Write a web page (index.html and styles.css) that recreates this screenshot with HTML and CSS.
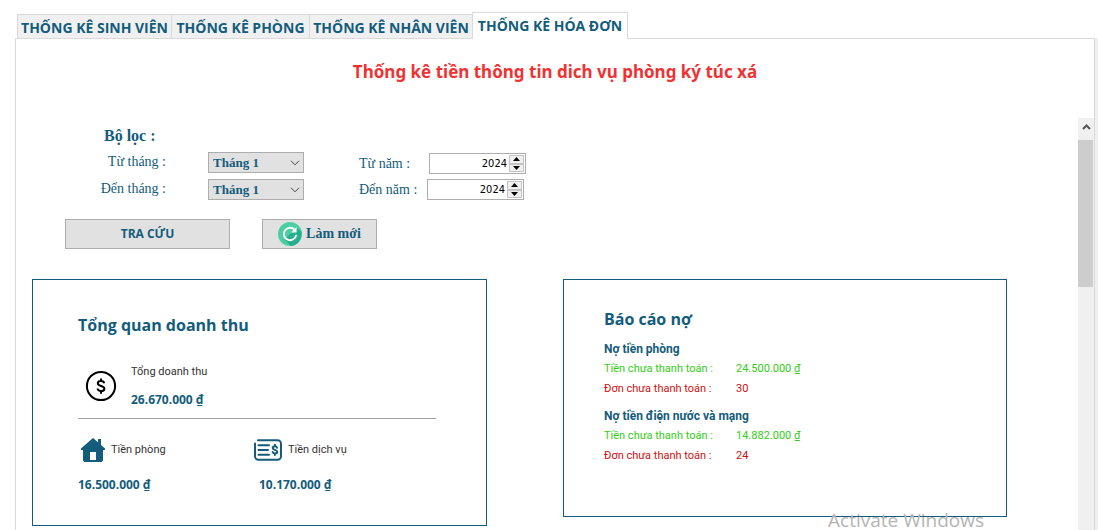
FILE: index.html
```html
<!DOCTYPE html>
<html lang="vi">
<head>
<meta charset="utf-8">
<meta name="viewport" content="width=device-width, initial-scale=1">
<title>Thống kê hóa đơn</title>
<link rel="stylesheet" href="styles.css">
</head>
<body>
<div class="window">
  <div class="tabs" role="tablist">
    <button class="tab tab-students" role="tab" type="button">THỐNG KÊ SINH VIÊN</button>
    <button class="tab tab-rooms" role="tab" type="button">THỐNG KÊ PHÒNG</button>
    <button class="tab tab-staff" role="tab" type="button">THỐNG KÊ NHÂN VIÊN</button>
    <button class="tab tab-invoices active" role="tab" type="button" aria-selected="true">THỐNG KÊ HÓA ĐƠN</button>
  </div>
  <main class="panel">
    <h1 class="title">Thống kê tiền thông tin dich vụ phòng ký túc xá</h1>
    <div class="view">
      <div class="content">
        <form class="filters">
          <h2 class="filters-title">Bộ lọc :</h2>
          <div class="filters-body">
            <div class="months">
              <label for="from-month">Từ tháng :</label>
              <span class="select"><select id="from-month"><option>Tháng 1</option></select><svg viewBox="0 0 10 6"><path d="M1 .8 5 4.8 9 .8"/></svg></span>
              <label for="to-month">Đến tháng :</label>
              <span class="select"><select id="to-month"><option>Tháng 1</option></select><svg viewBox="0 0 10 6"><path d="M1 .8 5 4.8 9 .8"/></svg></span>
            </div>
            <div class="years">
              <div class="year">
                <label for="from-year">Từ năm :</label>
                <span class="spinner"><input id="from-year" type="text" inputmode="numeric" value="2024"><span class="steps"><button type="button" aria-label="Tăng"><svg viewBox="0 0 7 4"><path d="M0 4 3.500 0 7 4z"/></svg></button><button type="button" aria-label="Giảm"><svg viewBox="0 0 7 4"><path d="M0 0h7L3.500 4z"/></svg></button></span></span>
              </div>
              <div class="year">
                <label for="to-year">Đến năm :</label>
                <span class="spinner"><input id="to-year" type="text" inputmode="numeric" value="2024"><span class="steps"><button type="button" aria-label="Tăng"><svg viewBox="0 0 7 4"><path d="M0 4 3.500 0 7 4z"/></svg></button><button type="button" aria-label="Giảm"><svg viewBox="0 0 7 4"><path d="M0 0h7L3.500 4z"/></svg></button></span></span>
              </div>
            </div>
          </div>
          <div class="actions">
            <button class="btn btn-search" type="button">TRA CỨU</button>
            <button class="btn btn-refresh" type="button">
              <svg class="refresh-icon" viewBox="0 0 24 24"><circle cx="12" cy="12" r="12" fill="#4bcfa2"/><path d="M18.600 5.500 23.300 9.800A12 12 0 0 1 12.800 24L6.500 17.600z" fill="#27ae8f"/><path d="M16.300 7.500A6.200 6.200 0 1 0 18.200 12.800" fill="none" stroke="#fff" stroke-width="1.900"/><path d="M18.600 5v5.400h-5.400z" fill="#fff"/></svg>
              Làm mới
            </button>
          </div>
        </form>
        <div class="cards">
          <section class="card revenue">
            <h2 class="card-title">Tổng quan doanh thu</h2>
            <div class="total">
              <svg class="coin" viewBox="0 0 32 32"><circle cx="16" cy="16" r="14.100" fill="none" stroke="#000" stroke-width="2"/><path d="M19.200 13.200c-.3-1.600-1.500-2.300-3.200-2.300-1.900 0-3.200.9-3.200 2.400 0 3.600 6.600 1.800 6.600 5.400 0 1.500-1.400 2.400-3.400 2.400-1.900 0-3.200-.9-3.400-2.600M16 8.500v2.400M16 21.100v2.600" fill="none" stroke="#000" stroke-width="2"/></svg>
              <div class="total-text">
                <span class="caption">Tổng doanh thu</span>
                <strong class="amount">26.670.000 ₫</strong>
              </div>
            </div>
            <div class="split">
              <div class="part room">
                <div class="part-head">
                  <svg class="house" viewBox="0 0 24 24"><path d="M12 0 0 10.500V12h2v10.500L3.500 24h17l1.500-1.500V12h2v-1.500l-4-3.600V1h-3v3.300z" fill="#135c7c"/><path d="M9 14h6v8H9z" fill="#fff"/></svg>
                  <span class="caption">Tiền phòng</span>
                </div>
                <strong class="amount">16.500.000 ₫</strong>
              </div>
              <div class="part service">
                <div class="part-head">
                  <svg class="bill" viewBox="0 0 28 22"><g fill="none" stroke="#135c7c" stroke-width="2" stroke-linecap="round"><path d="M4 1.200h19.500a3.500 3.500 0 0 1 3.500 3.500v12.500a3.500 3.500 0 0 1-3.500 3.500h-19A3.500 3.500 0 0 1 1 17.200V4.500"/><path d="M4.500 6.200H15M4.500 11H14M4.500 15.800H15"/><path d="M23 8.700c-.3-1-1-1.400-2.100-1.400-1.300 0-2.200.6-2.200 1.700 0 2.500 4.500 1.300 4.500 3.800 0 1.100-1 1.700-2.300 1.700s-2.100-.5-2.300-1.600M20.900 5.800v1.400M20.900 14.500V16"/></g></svg>
                  <span class="caption">Tiền dịch vụ</span>
                </div>
                <strong class="amount">10.170.000 ₫</strong>
              </div>
            </div>
          </section>
          <section class="card debt">
            <h2 class="card-title">Báo cáo nợ</h2>
            <h3 class="debt-title">Nợ tiền phòng</h3>
            <dl class="debt-list">
              <dt class="green">Tiền chưa thanh toán :</dt><dd class="green">24.500.000 ₫</dd>
              <dt class="red">Đơn chưa thanh toán :</dt><dd class="red">30</dd>
            </dl>
            <h3 class="debt-title">Nợ tiền điện nước và mạng</h3>
            <dl class="debt-list">
              <dt class="green">Tiền chưa thanh toán :</dt><dd class="green">14.882.000 ₫</dd>
              <dt class="red">Đơn chưa thanh toán :</dt><dd class="red">24</dd>
            </dl>
          </section>
        </div>
      </div>
      <div class="scrollbar">
        <button class="scroll-up" type="button" aria-label="Cuộn lên"><svg viewBox="0 0 9 6"><path d="M1 5 4.500 1.500 8 5"/></svg></button>
        <div class="thumb"></div>
      </div>
    </div>
  </main>
</div>
<div class="watermark">Activate Windows</div>
</body>
</html>
```
FILE: styles.css
```css
* { box-sizing: border-box; }
body {
  margin: 0;
  background: #fff;
  color: #135c7c;
  font-family: "Open Sans", "Noto Sans", sans-serif;
}
h1, h2, h3, dl, dd { margin: 0; }
button, input, select { font: inherit; color: inherit; margin: 0; padding: 0; border-radius: 0; }
svg { display: block; flex: none; }

.window {
  display: flex;
  flex-direction: column;
  height: 100vh;
  padding: 12px 0 0 15px;
  overflow: hidden;
}

.tabs { display: flex; align-items: flex-end; padding-left: 2px; }
.tab {
  height: 24px;
  border: 1px solid #d9d9d9;
  border-width: 1px 0 0 1px;
  background: #f0f0f0;
  font: 700 14px/26px "Open Sans", "Noto Sans", sans-serif;
  white-space: nowrap;
}
.tab-students { width: 154px; }
.tab-rooms { width: 138px; }
.tab-staff { width: 163px; }
.tab-invoices { width: 156px; }
.tab.active {
  height: 27px;
  margin-bottom: -1px;
  border-right-width: 1px;
  background: #fff;
  z-index: 1;
}

.panel {
  flex: 1;
  min-height: 0;
  display: flex;
  flex-direction: column;
  margin-right: 3px;
  border: 1px solid #d9d9d9;
  border-bottom: 0;
  box-shadow: 4px 0 #f0f0f0;
}
.title {
  padding: 20px 0 33px;
  color: #f03232;
  font: 700 17px/26px "Noto Sans", sans-serif;
  text-align: center;
}
.view { flex: 1; min-height: 0; display: flex; }
.content { flex: 1; min-width: 0; padding: 8px 71px 0 16px; }

.scrollbar { width: 16px; background: #f0f0f0; }
.scroll-up {
  display: flex;
  align-items: center;
  justify-content: center;
  width: 100%;
  height: 22px;
  padding-bottom: 4px;
  border: 0;
  background: #f0f0f0;
}
.scroll-up svg { width: 9px; height: 6px; fill: none; stroke: #555; stroke-width: 2; }
.thumb { height: 147px; margin-right: 1px; background: #cdcdcd; }

.filters { font-family: "Liberation Serif", "Times New Roman", serif; }
.filters-title { padding-left: 72px; font-size: 16px; line-height: 20px; }
.filters-body { display: flex; gap: 55px; padding: 6px 0 0 64px; }
.months {
  display: grid;
  grid-template-columns: 70px 96px;
  grid-auto-rows: 21px;
  gap: 6px 42px;
  font-size: 14px;
  line-height: 19px;
  text-align: right;
}
.select { position: relative; display: block; }
.select select {
  width: 100%;
  height: 21px;
  padding: 0 0 2px 4px;
  appearance: none;
  border: 1px solid #adadad;
  background: #e1e1e1;
  font-size: 13px;
  font-weight: 700;
}
.select svg {
  position: absolute;
  top: 8px;
  right: 4px;
  width: 10px;
  height: 6px;
  fill: none;
  stroke: #444;
  pointer-events: none;
}
.years { display: flex; flex-direction: column; gap: 4px; padding-top: 1px; }
.year { display: flex; justify-content: space-between; height: 22px; font-size: 14px; line-height: 22px; }
.year:first-child { width: 167px; }
.year:last-child { width: 165px; }
.spinner {
  display: flex;
  width: 97px;
  height: 21px;
  padding: 1px;
  border: 1px solid #adadad;
  background: #fff;
}
.spinner input {
  flex: 1;
  min-width: 0;
  padding-right: 2px;
  border: 0;
  color: #000;
  font: 11px/17px "DejaVu Sans Condensed", "DejaVu Sans", sans-serif;
  text-align: right;
}
.steps { display: flex; flex-direction: column; width: 15px; }
.steps button {
  flex: 1;
  display: flex;
  align-items: center;
  justify-content: center;
  border: 1px solid #c4c4c4;
  background: #f0f0f0;
}
.steps svg { width: 7px; height: 4px; fill: #000; }

.actions { display: flex; gap: 32px; padding: 18px 0 0 33px; }
.btn {
  display: flex;
  align-items: center;
  justify-content: center;
  height: 30px;
  border: 1px solid #adadad;
  background: #e1e1e1;
  font-weight: 700;
}
.btn-search { width: 165px; font: 700 12px/20px "Open Sans", "Noto Sans", sans-serif; }
.btn-refresh { width: 115px; gap: 4px; font-size: 14px; }
.refresh-icon { width: 24px; height: 24px; }

.cards { display: flex; align-items: flex-start; gap: 76px; padding-top: 30px; }
.card { min-width: 0; border: 1px solid #135c7c; }
.card-title { font-size: 16px; font-weight: 600; line-height: 24px; }
.card-title { font-weight: 700; }
.revenue { flex: 1 1 455px; height: 247px; padding: 33px 50px 0 45px; }
.debt { flex: 1 1 444px; height: 238px; padding: 27px 40px 0; }

.caption { color: #333; font: 11px/16px Roboto, "Noto Sans", sans-serif; }
.amount { font: 700 12px/16px "Open Sans", "Noto Sans", sans-serif; }
.total {
  display: flex;
  align-items: center;
  gap: 14px;
  padding: 27px 0 10px 7px;
  border-bottom: 1px solid #a0a0a0;
}
.total-text { display: flex; flex-direction: column; gap: 12px; }
.coin { width: 32px; height: 32px; }
.split { display: flex; padding-top: 17px; }
.part { display: flex; flex-direction: column; gap: 13px; }
.part-head { display: flex; align-items: center; gap: 6px; height: 28px; }
.room { width: 176px; }
.room .part-head { padding-left: 3px; }
.service .amount { padding-left: 5px; }
.house { width: 24px; height: 24px; }
.bill { width: 28px; height: 22px; }

.debt-title { padding: 9px 0 1px; font: 700 12px/18px Roboto, "Noto Sans", sans-serif; }
.debt-list {
  display: grid;
  grid-template-columns: 132px auto;
  font: 11px/20px Roboto, "Noto Sans", sans-serif;
}
.debt-list + .debt-title { padding-top: 8px; }
.green { color: #32cd14; }
.red { color: #d01010; }

.watermark {
  position: absolute;
  right: 114px;
  bottom: 0;
  color: #b4b4b4;
  font: 19px/20px "Open Sans", sans-serif;
  pointer-events: none;
}
```
